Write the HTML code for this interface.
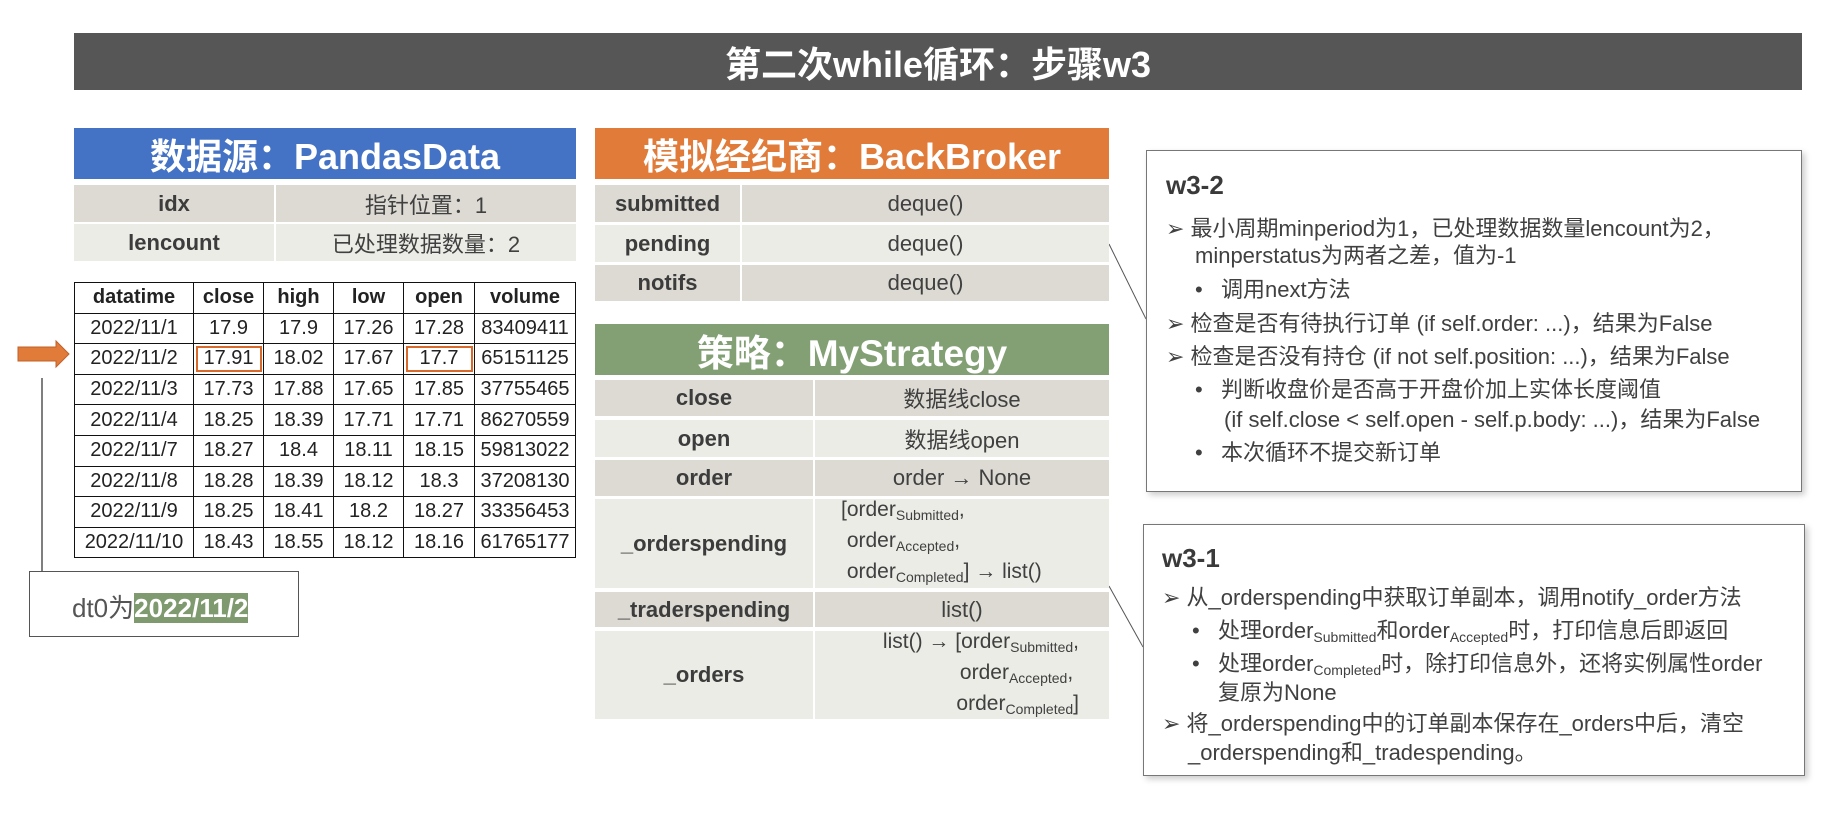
<!DOCTYPE html>
<html><head><meta charset="utf-8"><style>
*{margin:0;padding:0;box-sizing:border-box}
body{width:1838px;height:820px;background:#fff;position:relative;overflow:hidden;font-family:"Liberation Sans","Noto Sans CJK SC",sans-serif;color:#404040}
.a{position:absolute}
.hdr{position:absolute;color:#fff;font-weight:bold;text-align:center;font-size:36px;display:flex;align-items:center;justify-content:center}
.row{position:absolute;display:flex;font-size:22px}
.row div{display:flex;align-items:center;justify-content:center;text-align:center}
.k{font-weight:bold;color:#3c3c3c}
.d{background:#dcdad3}.l{background:#ebece6}
table{border-collapse:collapse;font-size:20px;color:#222}
td{border:1.5px solid #111;text-align:center;height:30.6px;padding:0}
.box{position:absolute;border:1.5px solid #777;background:#fff;box-shadow:3px 3px 6px #ccc}
.t{position:absolute;font-size:22px;color:#404040;white-space:nowrap}
.tt{position:absolute;font-size:26px;font-weight:bold;color:#3a3a3a}
sub{font-size:14px;vertical-align:-4px}
</style></head><body>
<div class="hdr" style="left:74px;top:33px;width:1728px;height:57px;background:#565656;font-size:36px">第二次while循环：步骤w3</div>

<div class="hdr" style="left:74px;top:128px;width:502px;height:51px;background:#4472c4">数据源：PandasData</div>
<div class="row" style="left:74px;top:185px;width:502px;height:37px"><div class="k d" style="width:200px;margin-right:2px">idx</div><div class="d" style="flex:1">指针位置：1</div></div>
<div class="row" style="left:74px;top:224px;width:502px;height:37px"><div class="k l" style="width:200px;margin-right:2px">lencount</div><div class="l" style="flex:1">已处理数据数量：2</div></div>

<table class="a" style="left:74px;top:282px;width:502px">
<colgroup><col style="width:119px"><col style="width:70px"><col style="width:70px"><col style="width:70px"><col style="width:71px"><col></colgroup>
<tr style="font-weight:bold"><td>datatime</td><td>close</td><td>high</td><td>low</td><td>open</td><td>volume</td></tr>
<tr><td>2022/11/1</td><td>17.9</td><td>17.9</td><td>17.26</td><td>17.28</td><td>83409411</td></tr>
<tr><td>2022/11/2</td><td style="outline:2px solid #d8692a;outline-offset:-4px">17.91</td><td>18.02</td><td>17.67</td><td style="outline:2px solid #d8692a;outline-offset:-4px">17.7</td><td>65151125</td></tr>
<tr><td>2022/11/3</td><td>17.73</td><td>17.88</td><td>17.65</td><td>17.85</td><td>37755465</td></tr>
<tr><td>2022/11/4</td><td>18.25</td><td>18.39</td><td>17.71</td><td>17.71</td><td>86270559</td></tr>
<tr><td>2022/11/7</td><td>18.27</td><td>18.4</td><td>18.11</td><td>18.15</td><td>59813022</td></tr>
<tr><td>2022/11/8</td><td>18.28</td><td>18.39</td><td>18.12</td><td>18.3</td><td>37208130</td></tr>
<tr><td>2022/11/9</td><td>18.25</td><td>18.41</td><td>18.2</td><td>18.27</td><td>33356453</td></tr>
<tr><td>2022/11/10</td><td>18.43</td><td>18.55</td><td>18.12</td><td>18.16</td><td>61765177</td></tr>
</table>

<svg class="a" style="left:0;top:0" width="1838" height="820">
<polygon points="18,347 56,347 56,341 69,354 56,367 56,361 18,361" fill="#e07b39" stroke="#c0602a"/>
<line x1="42" y1="378" x2="42" y2="572" stroke="#555" stroke-width="1.5"/>
<line x1="1109" y1="244" x2="1146" y2="319" stroke="#555" stroke-width="1"/>
<line x1="1109" y1="586" x2="1143" y2="647" stroke="#555" stroke-width="1"/>
</svg>

<div class="box" style="left:29px;top:571px;width:270px;height:66px;box-shadow:none;border-color:#555"></div>
<div class="t" style="left:72px;top:588px;font-size:26px;color:#555">dt0为<span style="background:#7f9a6f;color:#fff;font-weight:bold">2022/11/2</span></div>

<div class="hdr" style="left:595px;top:128px;width:514px;height:51px;background:#e07b39">模拟经纪商：BackBroker</div>
<div class="row" style="left:595px;top:185px;width:514px;height:37px"><div class="k d" style="width:145px;margin-right:2px">submitted</div><div class="d" style="flex:1">deque()</div></div>
<div class="row" style="left:595px;top:225px;width:514px;height:37px"><div class="k l" style="width:145px;margin-right:2px">pending</div><div class="l" style="flex:1">deque()</div></div>
<div class="row" style="left:595px;top:265px;width:514px;height:36px"><div class="k d" style="width:145px;margin-right:2px">notifs</div><div class="d" style="flex:1">deque()</div></div>

<div class="hdr" style="left:595px;top:324px;width:514px;height:51px;background:#83a074;font-size:37px">策略：MyStrategy</div>
<div class="row" style="left:595px;top:380px;width:514px;height:36px"><div class="k d" style="width:218px;margin-right:2px">close</div><div class="d" style="flex:1">数据线close</div></div>
<div class="row" style="left:595px;top:420px;width:514px;height:37px"><div class="k l" style="width:218px;margin-right:2px">open</div><div class="l" style="flex:1">数据线open</div></div>
<div class="row" style="left:595px;top:460px;width:514px;height:36px"><div class="k d" style="width:218px;margin-right:2px">order</div><div class="d" style="flex:1">order → None</div></div>
<div class="row" style="left:595px;top:499px;width:514px;height:89px"><div class="k l" style="width:218px;margin-right:2px">_orderspending</div><div class="l" style="flex:1;flex-direction:column;align-items:flex-start;padding-left:26px;line-height:26px;font-size:21px">
<span>[order<sub>Submitted</sub>,</span><span>&nbsp;order<sub>Accepted</sub>,</span><span>&nbsp;order<sub>Completed</sub>] → list()</span></div></div>
<div class="row" style="left:595px;top:592px;width:514px;height:35px"><div class="k d" style="width:218px;margin-right:2px">_traderspending</div><div class="d" style="flex:1">list()</div></div>
<div class="row" style="left:595px;top:631px;width:514px;height:88px"><div class="k l" style="width:218px;margin-right:2px">_orders</div><div class="l" style="flex:1;flex-direction:column;align-items:flex-end;padding-right:30px;line-height:26px;font-size:21px">
<span>list() → [order<sub>Submitted</sub>,</span><span>order<sub>Accepted</sub>,&nbsp;</span><span>order<sub>Completed</sub>]</span></div></div>

<div class="box" style="left:1146px;top:150px;width:656px;height:342px"></div>
<div class="tt" style="left:1166px;top:170px">w3-2</div>
<div class="t" style="left:1166px;top:211px">➢&nbsp;最小周期minperiod为1，已处理数据数量lencount为2，</div>
<div class="t" style="left:1195px;top:238px">minperstatus为两者之差，值为-1</div>
<div class="t" style="left:1195px;top:272px">•&nbsp;&nbsp; 调用next方法</div>
<div class="t" style="left:1166px;top:306px">➢&nbsp;检查是否有待执行订单 (if self.order: ...)，结果为False</div>
<div class="t" style="left:1166px;top:339px">➢&nbsp;检查是否没有持仓 (if not self.position: ...)，结果为False</div>
<div class="t" style="left:1195px;top:372px">•&nbsp;&nbsp; 判断收盘价是否高于开盘价加上实体长度阈值</div>
<div class="t" style="left:1224px;top:402px">(if self.close &lt; self.open - self.p.body: ...)，结果为False</div>
<div class="t" style="left:1195px;top:435px">•&nbsp;&nbsp; 本次循环不提交新订单</div>

<div class="box" style="left:1143px;top:524px;width:662px;height:252px"></div>
<div class="tt" style="left:1162px;top:543px">w3-1</div>
<div class="t" style="left:1162px;top:580px">➢ 从_orderspending中获取订单副本，调用notify_order方法</div>
<div class="t" style="left:1192px;top:613px">•&nbsp;&nbsp; 处理order<sub>Submitted</sub>和order<sub>Accepted</sub>时，打印信息后即返回</div>
<div class="t" style="left:1192px;top:646px">•&nbsp;&nbsp; 处理order<sub>Completed</sub>时，除打印信息外，还将实例属性order</div>
<div class="t" style="left:1218px;top:675px">复原为None</div>
<div class="t" style="left:1162px;top:706px">➢ 将_orderspending中的订单副本保存在_orders中后，清空</div>
<div class="t" style="left:1188px;top:735px">_orderspending和_tradespending。</div>
</body></html>
